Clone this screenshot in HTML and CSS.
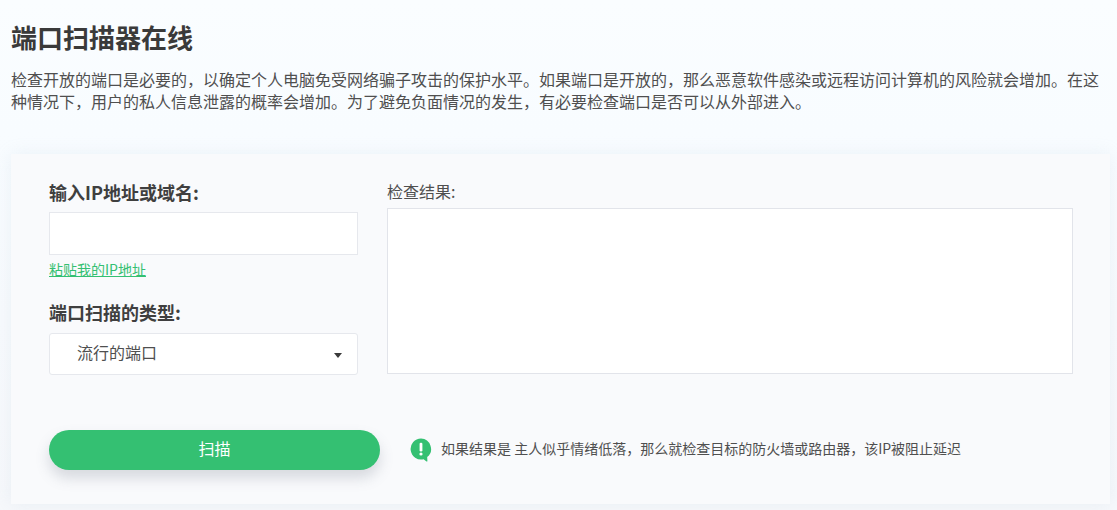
FILE: index.html
```html
<!DOCTYPE html>
<html lang="zh">
<head>
<meta charset="utf-8">
<title>端口扫描器在线</title>
<link rel="stylesheet" href="styles.css">
</head>
<body>
<main class="page">
  <h1 class="title">端口扫描器在线</h1>
  <p class="intro">检查开放的端口是必要的&#xFF0C;以确定个人电脑免受网络骗子攻击的保护水平。如果端口是开放的&#xFF0C;那么恶意软件感染或远程访问计算机的风险就会增加。在这种情况下&#xFF0C;用户的私人信息泄露的概率会增加。为了避免负面情况的发生&#xFF0C;有必要检查端口是否可以从外部进入。</p>
  <section class="panel">
    <div class="form-row">
      <div class="left">
        <label class="label">输入IP地址或域名:</label>
        <div class="input"></div>
        <a class="paste" href="#">粘贴我的IP地址</a>
        <label class="label type-label">端口扫描的类型:</label>
        <div class="select">
          <span class="select-text">流行的端口</span>
          <span class="caret"></span>
        </div>
      </div>
      <div class="right">
        <label class="result-label">检查结果:</label>
        <div class="result"></div>
      </div>
    </div>
    <div class="action-row">
      <button class="scan" type="button">扫描</button>
      <div class="hint">
        <svg class="hint-icon" viewBox="0 0 22 24" width="22" height="24" aria-hidden="true">
          <path d="M11 0.5a10.5 10.5 0 1 0 2.6 20.7l2.9 2.3c.5.3.9 0 .9-.5l-.2-3.9A10.5 10.5 0 0 0 11 .5z" fill="#34c072"/>
          <rect x="9.6" y="4.8" width="2.8" height="8.6" rx="1.2" fill="#fff"/>
          <circle cx="11" cy="16" r="1.6" fill="#fff"/>
        </svg>
        <span class="hint-text">如果结果是 主人似乎情绪低落&#xFF0C;那么就检查目标的防火墙或路由器&#xFF0C;该IP被阻止延迟</span>
      </div>
    </div>
  </section>
</main>
</body>
</html>
```
FILE: styles.css
```css
* { box-sizing: border-box; }
html, body { margin: 0; height: 100%; }
body {
  background: linear-gradient(#fafdff 0, #f8fcff 130px, #f6f8fb 100%);
  color: #3f3f3f;
  font-family: "Noto Sans CJK SC", "Noto Sans", sans-serif;
  overflow: hidden;
}
.page { padding: 20px 7px 0 11px; }
.title {
  margin: 0;
  font-size: 26px;
  line-height: 34px;
  font-weight: 700;
  color: #3a3a3a;
}
.intro {
  margin: 14px 0 0;
  font-size: 16px;
  line-height: 22px;
  color: #4f4f4f;
}
.panel {
  margin-top: 42px;
  height: 350px;
  padding: 26px 37px 0 38px;
  background: #f9fafc;
  box-shadow: 0 0 16px rgba(170, 185, 205, .16);
}
.form-row { display: flex; gap: 29px; }
.left { width: 309px; flex: none; }
.right { flex: 1; }
.label {
  display: block;
  font-size: 18px;
  line-height: 24px;
  font-weight: 700;
  color: #3f3f3f;
}
.input {
  margin-top: 8px;
  height: 43px;
  background: #fff;
  border: 1px solid #e6e8ed;
}
.paste {
  display: block;
  margin-top: 4px;
  font-size: 14px;
  line-height: 20px;
  color: #34c072;
  text-decoration: underline;
}
.type-label { margin-top: 21px; }
.select {
  margin-top: 9px;
  height: 42px;
  padding: 0 15px 0 28px;
  display: flex;
  align-items: center;
  justify-content: space-between;
  background: #fff;
  border: 1px solid #e6e8ed;
  border-radius: 3px;
  font-size: 16px;
  line-height: 22px;
  color: #4f4f4f;
}
.select-text { margin: 0 0 4px -1px; }
.caret {
  width: 0;
  height: 0;
  margin-top: 3px;
  border-left: 4px solid transparent;
  border-right: 4px solid transparent;
  border-top: 5px solid #3a3a3a;
}
.result-label {
  display: block;
  font-size: 16px;
  line-height: 22px;
  color: #4f4f4f;
}
.result {
  margin-top: 6px;
  height: 166px;
  background: #fff;
  border: 1px solid #e2e4ea;
}
.action-row {
  display: flex;
  align-items: center;
  margin-top: 55px;
}
.scan {
  width: 331px;
  height: 40px;
  padding: 0 0 4px;
  border: 0;
  border-radius: 20px;
  background: #34c072;
  color: #fff;
  font: inherit;
  font-size: 16px;
  box-shadow: 0 8px 14px rgba(90, 100, 120, .22);
}
.hint {
  display: flex;
  align-items: center;
  gap: 9px;
  margin-left: 30px;
  font-size: 14px;
  line-height: 20px;
  color: #4f4f4f;
}
.hint-text { margin-bottom: 4px; }
.hint-icon { flex: none; margin-bottom: 1px; }
```
